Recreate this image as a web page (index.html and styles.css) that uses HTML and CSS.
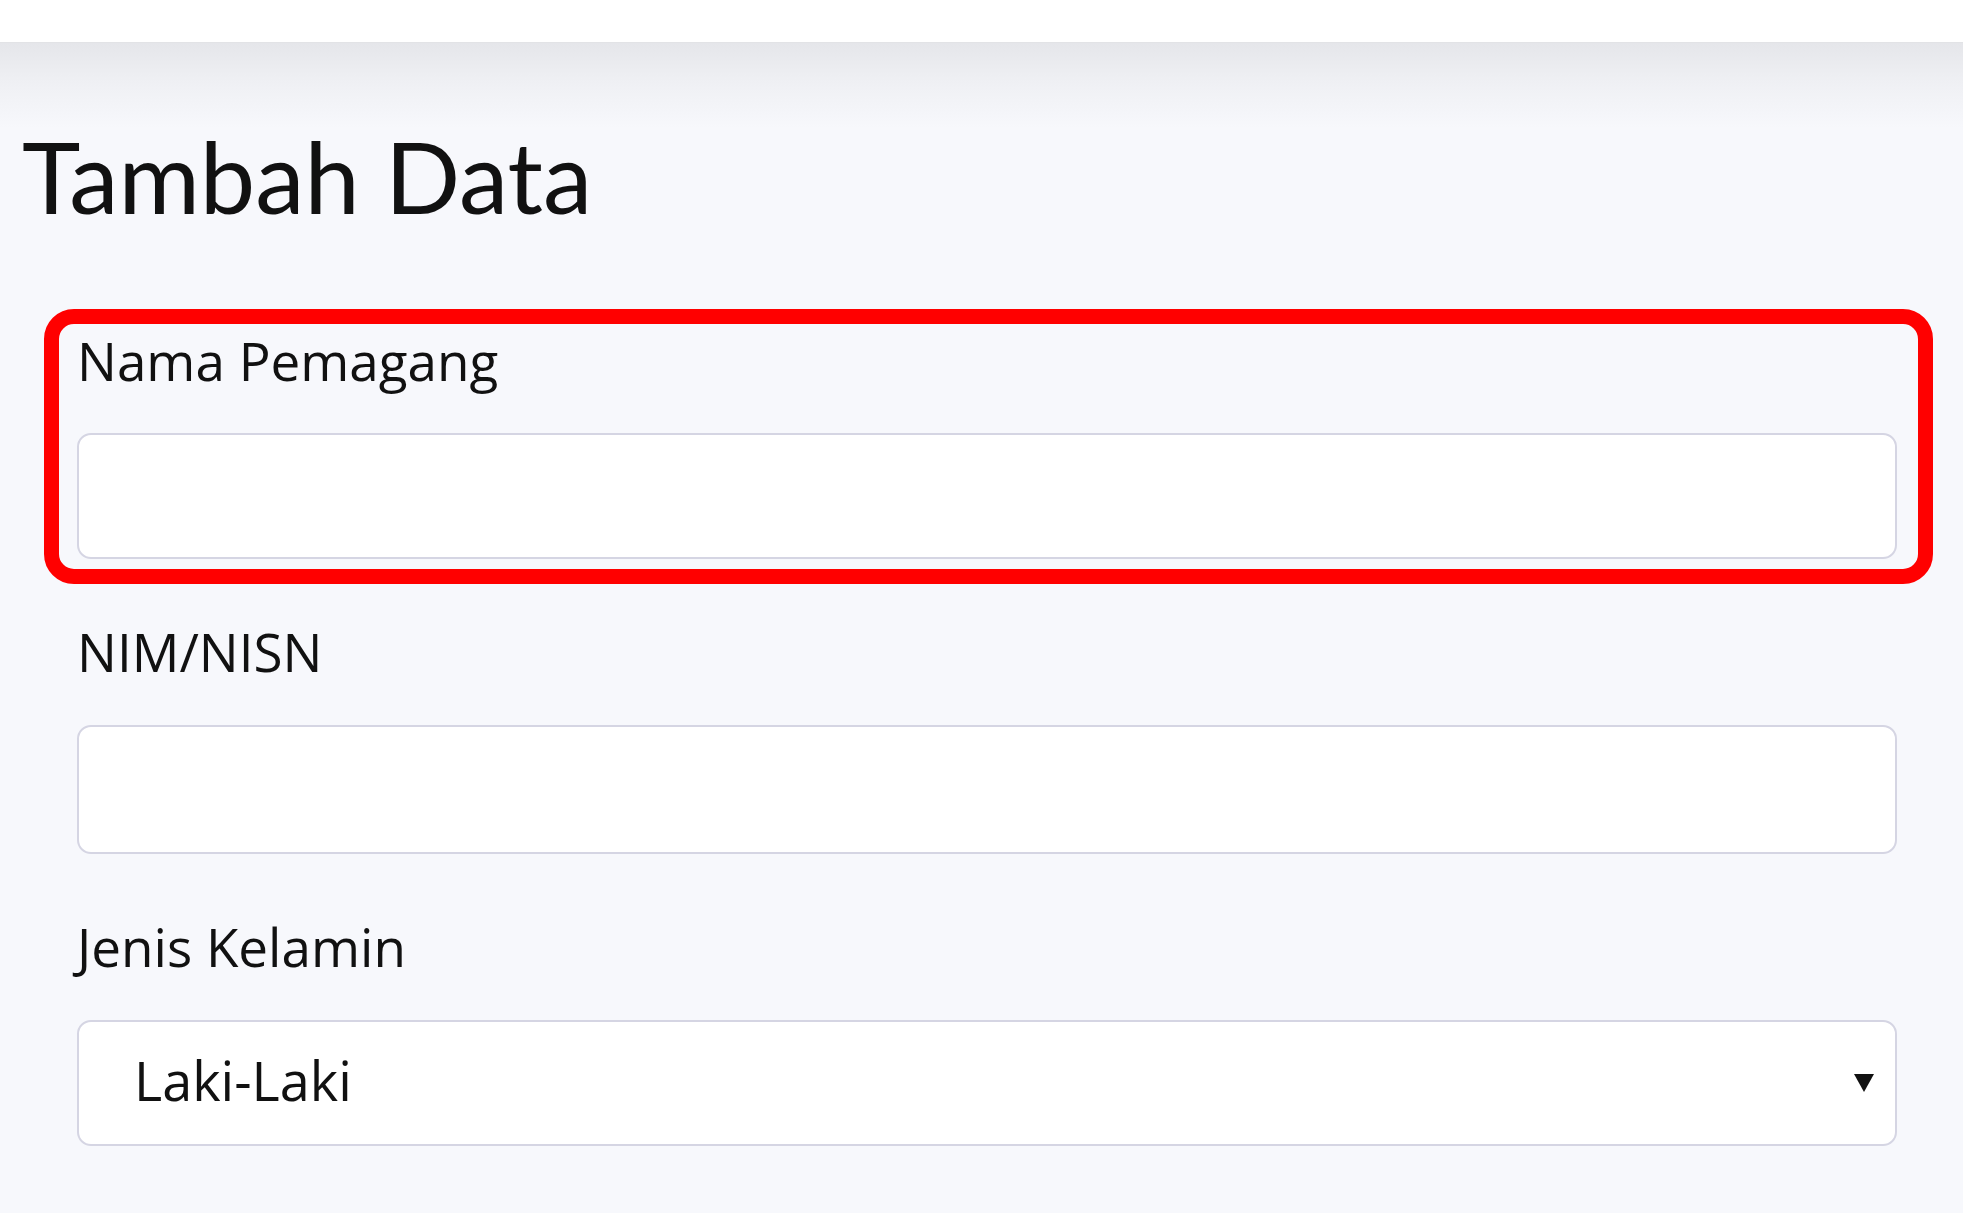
FILE: index.html
```html
<!DOCTYPE html>
<html lang="id">
<head>
<meta charset="utf-8">
<title>Tambah Data</title>
<link rel="stylesheet" href="styles.css">
</head>
<body>
<header class="topbar"></header>
<main class="content">
  <h1 class="title">Tambah Data</h1>
  <form class="form">
    <div class="field field-highlight">
      <label class="label" for="nama">Nama Pemagang</label>
      <input class="input" id="nama" type="text">
    </div>
    <div class="field">
      <label class="label" for="nim">NIM/NISN</label>
      <input class="input input-tall" id="nim" type="text">
    </div>
    <div class="field">
      <label class="label" for="jk">Jenis Kelamin</label>
      <div class="select-wrap">
        <select class="input select" id="jk">
          <option>Laki-Laki</option>
          <option>Perempuan</option>
        </select>
        <svg class="select-arrow" width="20" height="18" viewBox="0 0 20 18"><path d="M0 0H20L10 18Z" fill="#111"/></svg>
      </div>
    </div>
  </form>
</main>
</body>
</html>
```
FILE: styles.css
```css
* { box-sizing: border-box; }
html, body { margin: 0; padding: 0; }
body {
  background: #f7f8fc;
  font-family: "Open Sans", Lato, sans-serif;
  color: #111;
  height: 1213px;
  overflow: hidden;
}
.topbar {
  height: 43px;
  background: #ffffff;
  border-bottom: 1px solid #e2e3e6;
}
.content {
  background: linear-gradient(to bottom, #e5e6ea 0px, #eeeff3 35px, #f7f8fc 85px, #f7f8fc 100%);
  padding: 74px 30px 0 22px;
  height: 1170px;
}
.title {
  margin: 0;
  font-family: Lato, "Open Sans", sans-serif;
  font-size: 99px;
  font-weight: 400;
  line-height: 1.2;
}
.form {
  margin: 73px 0 0 22px;
  display: flex;
  flex-direction: column;
  gap: 16px;
}
.field {
  border: 15px solid transparent;
  border-radius: 30px;
  padding: 5px 21px 10px 18px;
  display: flex;
  flex-direction: column;
}
.field-highlight { border-color: #ff0000; }
.label {
  font-size: 53px;
  line-height: 1.2;
  margin-bottom: 41px;
}
.input {
  display: block;
  width: 100%;
  height: 126px;
  background: #ffffff;
  border: 2px solid #d5d5e3;
  border-radius: 14px;
  font-family: inherit;
  font-size: 54px;
  color: #111;
  outline: none;
}
.input-tall { height: 129px; }
.select-wrap { position: relative; }
.select {
  appearance: none;
  -webkit-appearance: none;
  padding: 0 60px 6px 55px;
}
.select-arrow {
  position: absolute;
  right: 23px;
  top: 54px;
  pointer-events: none;
}
```
